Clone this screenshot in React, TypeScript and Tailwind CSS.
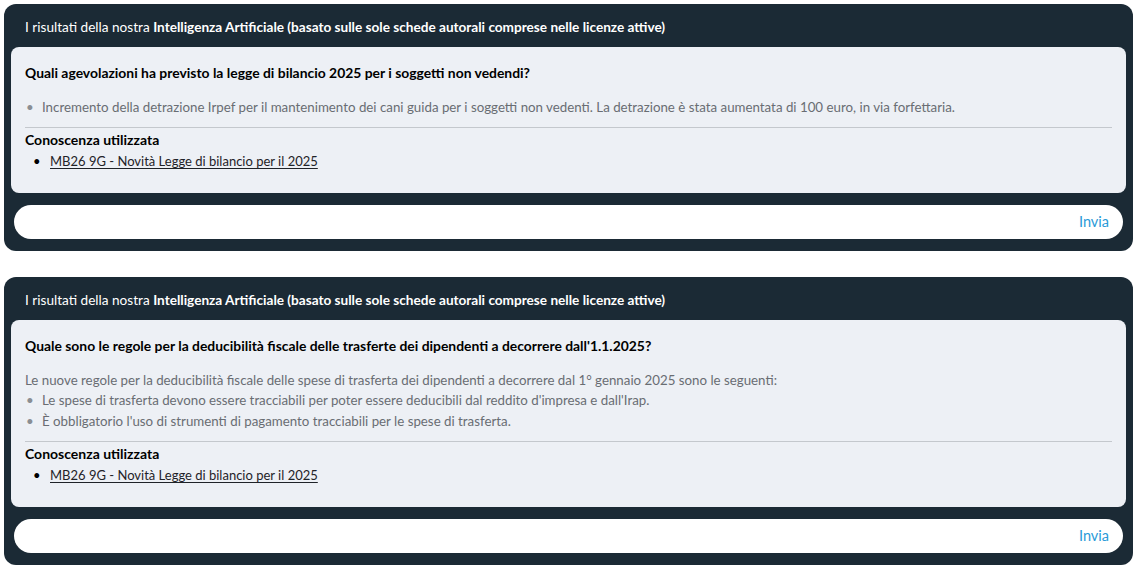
import { useState } from 'react';

interface Answer {
  question: string;
  intro?: string;
  bullets: string[];
  sources: string[];
}

const answers: Answer[] = [
  {
    question: 'Quali agevolazioni ha previsto la legge di bilancio 2025 per i soggetti non vedendi?',
    bullets: [
      'Incremento della detrazione Irpef per il mantenimento dei cani guida per i soggetti non vedenti. La detrazione è stata aumentata di 100 euro, in via forfettaria.',
    ],
    sources: ['MB26 9G - Novità Legge di bilancio per il 2025'],
  },
  {
    question: "Quale sono le regole per la deducibilità fiscale delle trasferte dei dipendenti a decorrere dall'1.1.2025?",
    intro: 'Le nuove regole per la deducibilità fiscale delle spese di trasferta dei dipendenti a decorrere dal 1° gennaio 2025 sono le seguenti:',
    bullets: [
      "Le spese di trasferta devono essere tracciabili per poter essere deducibili dal reddito d'impresa e dall'Irap.",
      "È obbligatorio l'uso di strumenti di pagamento tracciabili per le spese di trasferta.",
    ],
    sources: ['MB26 9G - Novità Legge di bilancio per il 2025'],
  },
];

function AnswerCard({ answer }: { answer: Answer }) {
  const [value, setValue] = useState('');

  return (
    <div className="bg-[#1b2a35] rounded-[12px] px-[7px] pt-[13px] pb-[12px]">
      <p className="px-[14px] text-[13.6px] leading-[20px] text-white">
        I risultati della nostra <strong className="font-bold">Intelligenza Artificiale (basato sulle sole schede autorali comprese nelle licenze attive)</strong>
      </p>

      <div className="mt-[10px] bg-[#edf0f5] rounded-[8px] px-[14px] pt-[16px] pb-[22px]">
        <h3 className="text-[13.9px] leading-[20px] font-bold text-black">{answer.question}</h3>

        <div className="mt-[14px] text-[13.3px] leading-[20px] text-[#696d73]">
          {answer.intro && <p>{answer.intro}</p>}
          <ul className="space-y-[1px]">
            {answer.bullets.map(b => (
              <li key={b} className="flex items-start">
                <span className="w-[17px] shrink-0 pl-[1px] text-[#8a8e93]">•</span>
                <span>{b}</span>
              </li>
            ))}
          </ul>
        </div>

        <div className="mt-[10px] border-t border-[#c4c8cd] pt-[2px]">
          <p className="text-[14px] leading-[20px] font-bold text-black">Conoscenza utilizzata</p>
          <ul className="mt-[1px]">
            {answer.sources.map(s => (
              <li key={s} className="flex items-start text-[13px] leading-[20px] text-[#1f2328]">
                <span className="w-[25px] shrink-0 pl-[8px] text-black">•</span>
                <a href="#" className="underline underline-offset-2">{s}</a>
              </li>
            ))}
          </ul>
        </div>
      </div>

      <div className="mt-[12px] mx-[3px] h-[34px] bg-white rounded-full flex items-center pl-[20px] pr-[14px]">
        <input
          value={value}
          onChange={e => setValue(e.target.value)}
          className="flex-1 bg-transparent outline-none text-[14px] text-black"
        />
        <button className="text-[14.5px] text-[#2a9ad8]">Invia</button>
      </div>
    </div>
  );
}

export default function App() {
  return (
    <div className="min-h-screen bg-white p-[4px] font-['Lato','Noto_Sans',sans-serif]">
      <div className="flex flex-col gap-[26px]">
        {answers.map(a => (
          <AnswerCard key={a.question} answer={a} />
        ))}
      </div>
    </div>
  );
}
